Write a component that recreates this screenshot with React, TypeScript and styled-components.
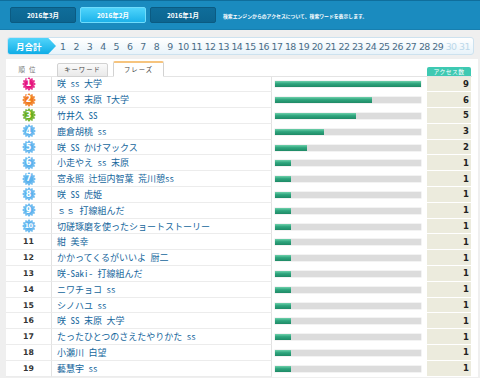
import React from "react";
import styled, { createGlobalStyle } from "styled-components";

const GlobalStyle = createGlobalStyle`
  html, body { margin: 0; padding: 0; }
  body {
    background: #efefef;
    font-family: "Noto Sans CJK JP", "DejaVu Sans", sans-serif;
    width: 480px;
    height: 378px;
    overflow: hidden;
  }
`;

const Header = styled.header`
  height: 30px;
  box-sizing: border-box;
  background: #1a8bbf;
  border-top: 1px solid #0f6e9c;
  border-bottom: 1px solid #177fb0;
  display: flex;
  align-items: center;
  padding-left: 10px;
  gap: 4px;
`;

const MonthTab = styled.div<{ $active?: boolean }>`
  width: 66px;
  height: 16px;
  box-sizing: border-box;
  border-radius: 2px;
  display: flex;
  align-items: center;
  justify-content: center;
  color: #fff;
  font-size: 6.5px;
  font-weight: bold;
  background: ${(p) =>
    p.$active
      ? "linear-gradient(#4fd4fb, #1cb2ea)"
      : "linear-gradient(#0f6d9a, #0c6590)"};
  border: 1px solid ${(p) => (p.$active ? "#6fdcfb" : "#0b5b82")};
`;

const HeaderNote = styled.span`
  color: #fff;
  font-size: 4.85px;
  font-weight: bold;
  margin-left: 3px;
  white-space: nowrap;
`;

const MonthBar = styled.div`
  margin: 7px 0 0 7px;
  width: 467px;
  height: 18px;
  box-sizing: border-box;
  border: 1px solid #cde2ef;
  border-radius: 3px;
  background: linear-gradient(#ffffff, #e8f3fa);
  display: flex;
  align-items: center;
`;

const TotalLabel = styled.div`
  width: 48px;
  height: 16px;
  border-radius: 2px 0 0 2px;
  background: linear-gradient(#52d5fb, #10ade6);
  clip-path: polygon(0 0, 84% 0, 100% 50%, 84% 100%, 0 100%);
  color: #fff;
  font-size: 8.5px;
  font-weight: bold;
  display: flex;
  align-items: center;
  padding-left: 8px;
  box-sizing: border-box;
`;

const Days = styled.div`
  display: flex;
`;

const Day = styled.span<{ $muted?: boolean }>`
  width: 13.4px;
  text-align: center;
  font-family: "DejaVu Sans", sans-serif;
  font-size: 9.4px;
  letter-spacing: -0.6px;
  color: ${(p) => (p.$muted ? "#bcd8ea" : "#4a6c86")};
`;

const Panel = styled.section`
  margin: 4px 2px 0 6px;
  background: #fff;
  padding-right: 6px;
`;

const Grid = styled.div`
  display: grid;
  grid-template-columns: 46px 220px 154px 45px;
`;

const HeadRow = styled(Grid)`
  height: 17.5px;
  box-sizing: border-box;
  border-bottom: 1px solid #e4e4e4;
`;

const RankHead = styled.div`
  font-size: 6.5px;
  color: #777;
  display: flex;
  align-items: flex-end;
  justify-content: center;
  padding-bottom: 2px;
  letter-spacing: 4px;
`;

const TabGroup = styled.div`
  display: flex;
  align-items: flex-end;
  gap: 5px;
  padding-left: 5px;
  grid-column: span 2;
`;

const SubTab = styled.div<{ $active?: boolean }>`
  width: 51px;
  height: ${(p) => (p.$active ? "16px" : "14px")};
  box-sizing: border-box;
  margin-bottom: -1px;
  border: 1px solid #d2d2d2;
  border-bottom: ${(p) => (p.$active ? "1px solid #fff" : "1px solid #d2d2d2")};
  border-top: ${(p) => (p.$active ? "2px solid #f6c47e" : "1px solid #d2d2d2")};
  border-radius: 2px 2px 0 0;
  background: ${(p) => (p.$active ? "#fff" : "linear-gradient(#fafafa, #e9e9e9)")};
  font-size: 6.3px;
  color: #444;
  display: flex;
  align-items: center;
  justify-content: center;
  letter-spacing: 1px;
`;

const CountHead = styled.div`
  align-self: end;
  margin-left: 1px;
  height: 8.5px;
  border-radius: 2px 2px 0 0;
  background: #3ec9b2;
  color: #fff;
  font-size: 5.8px;
  display: flex;
  align-items: center;
  justify-content: center;
  letter-spacing: 0.5px;
`;

const Row = styled(Grid)`
  height: 15.8px;
`;

const RankCell = styled.div`
  border-bottom: 1px solid #ececec;
  border-right: 1px solid #e2e2e2;
  display: flex;
  align-items: center;
  justify-content: center;
  font-family: "DejaVu Sans", sans-serif;
  font-weight: bold;
  font-size: 7.8px;
  color: #333;
`;

const KeywordCell = styled.div`
  border-bottom: 1px solid #ececec;
  border-right: 1px solid #e2e2e2;
  display: flex;
  align-items: center;
  padding-left: 5px;
  font-size: 9px;
  font-feature-settings: "hwid" 1;
  color: #14669c;
  white-space: pre;
  overflow: hidden;
`;

const FullWidth = styled.span`
  font-feature-settings: normal;
`;

const BarCell = styled.div`
  display: flex;
  align-items: center;
  padding-left: 3px;
`;

const BarTrack = styled.div`
  width: 146px;
  height: 6px;
  background: #dcdcdc;
  box-shadow: 0 0 0 0.5px #e8e8e8;
`;

const BarFill = styled.div`
  height: 100%;
  background: linear-gradient(#6fd0ab 0%, #2ea57d 45%, #1f8a66 100%);
`;

const CountCell = styled.div`
  background: #ecebdd;
  border-bottom: 1px solid #fff;
  margin-left: 1px;
  display: flex;
  align-items: center;
  justify-content: flex-end;
  padding-right: 2px;
  font-family: "DejaVu Sans", sans-serif;
  font-weight: bold;
  font-size: 8.5px;
  color: #222;
`;

const Badge = styled.span`
  position: relative;
  width: 14px;
  height: 14px;
  display: inline-flex;
  align-items: center;
  justify-content: center;
  color: #fff;
  font-family: "DejaVu Sans", sans-serif;
  font-weight: bold;
  svg {
    position: absolute;
    inset: 0;
  }
`;

const BadgeNum = styled.span<{ $small?: boolean }>`
  position: relative;
  font-size: ${(p) => (p.$small ? "6.5px" : "8px")};
  letter-spacing: ${(p) => (p.$small ? "-0.6px" : "0")};
`;

const starPoints = (() => {
  const pts: string[] = [];
  const n = 12;
  for (let i = 0; i < n * 2; i++) {
    const r = i % 2 === 0 ? 7 : 5.3;
    const a = (Math.PI * i) / n - Math.PI / 2;
    pts.push(`${(7 + r * Math.cos(a)).toFixed(2)},${(7 + r * Math.sin(a)).toFixed(2)}`);
  }
  return pts.join(" ");
})();

const badgeColor = (rank: number) =>
  rank === 1 ? "#e5157e" : rank === 2 ? "#f07a1e" : rank === 3 ? "#69ae1f" : "#5cb3ee";

const RankBadge = ({ rank }: { rank: number }) => (
  <Badge>
    <svg width="14" height="14" viewBox="0 0 14 14">
      <polygon points={starPoints} fill={badgeColor(rank)} />
      <circle cx="7" cy="7" r="4.8" fill={badgeColor(rank)} stroke="rgba(255,255,255,0.35)" strokeWidth="0.6" />
    </svg>
    <BadgeNum $small={rank >= 10}>{rank}</BadgeNum>
  </Badge>
);

const rows: [React.ReactNode, number][] = [
  ["咲 ss 大学", 9],
  ["咲 SS 末原 T大学", 6],
  ["竹井久 SS", 5],
  ["鹿倉胡桃 ss", 3],
  ["咲 SS かけマックス", 2],
  ["小走やえ ss 末原", 1],
  ["宮永照 辻垣内智葉 荒川憩ss", 1],
  ["咲 SS 虎姫", 1],
  [<><FullWidth>ｓｓ</FullWidth> 打線組んだ</>, 1],
  ["切磋琢磨を使ったショートストーリー", 1],
  ["紺 美幸", 1],
  ["かかってくるがいいよ 厨二", 1],
  ["咲-Saki- 打線組んだ", 1],
  ["ニワチョコ ss", 1],
  ["シノハユ ss", 1],
  ["咲 SS 末原 大学", 1],
  ["たったひとつのさえたやりかた ss", 1],
  ["小瀬川 白望", 1],
  ["藝慧宇 ss", 1],
];

const max = 9;

export default function App() {
  const days = Array.from({ length: 31 }, (_, i) => i + 1);
  return (
    <>
      <GlobalStyle />
      <Header>
        <MonthTab>2016年3月</MonthTab>
        <MonthTab $active>2016年2月</MonthTab>
        <MonthTab>2016年1月</MonthTab>
        <HeaderNote>検索エンジンからのアクセスについて、検索ワードを表示します。</HeaderNote>
      </Header>
      <MonthBar>
        <TotalLabel>月合計</TotalLabel>
        <Days>
          {days.map((d) => (
            <Day key={d} $muted={d >= 30}>
              {d}
            </Day>
          ))}
        </Days>
      </MonthBar>
      <Panel>
        <HeadRow>
          <RankHead>順位</RankHead>
          <TabGroup>
            <SubTab>キーワード</SubTab>
            <SubTab $active>フレーズ</SubTab>
          </TabGroup>
          <CountHead>アクセス数</CountHead>
        </HeadRow>
        {rows.map(([kw, n], i) => (
          <Row key={i}>
            <RankCell>{i < 10 ? <RankBadge rank={i + 1} /> : i + 1}</RankCell>
            <KeywordCell>{kw}</KeywordCell>
            <BarCell>
              <BarTrack>
                <BarFill style={{ width: `${(n / max) * 100}%` }} />
              </BarTrack>
            </BarCell>
            <CountCell>{n}</CountCell>
          </Row>
        ))}
      </Panel>
    </>
  );
}
